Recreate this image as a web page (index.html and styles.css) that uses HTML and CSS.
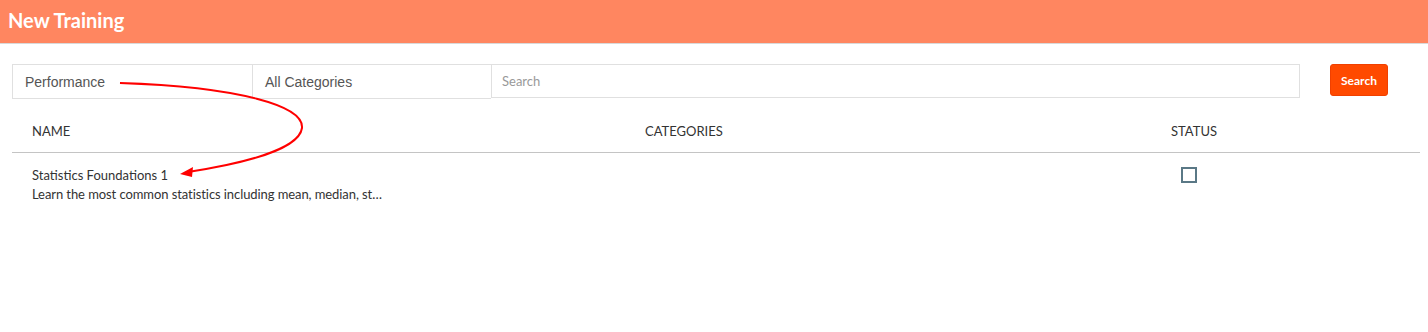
FILE: index.html
```html
<!DOCTYPE html>
<html lang="en">
<head>
    <meta charset="UTF-8">
    <meta name="viewport" content="width=device-width, initial-scale=1.0">
    <title>New Training</title>
    <link rel="stylesheet" href="styles.css">
</head>
<body>

<div class="page-header">
    <h1>New Training</h1>
</div>

<div class="filter-row">
    <div class="filter-group">
        <div class="filter-select">Performance</div>
        <div class="filter-select">All Categories</div>
        <input type="text" class="filter-search" placeholder="Search">
    </div>
    <button type="button" class="btn-search">Search</button>
</div>

<table class="training-table">
    <thead>
        <tr>
            <th class="col-name">Name</th>
            <th class="col-categories">Categories</th>
            <th class="col-status">Status</th>
        </tr>
    </thead>
    <tbody>
        <tr>
            <td>
                <div class="training-title">Statistics Foundations 1</div>
                <div class="training-desc">Learn the most common statistics including mean, median, st…</div>
            </td>
            <td></td>
            <td class="status-cell"><span class="status-box"></span></td>
        </tr>
    </tbody>
</table>

<!-- annotation arrow drawn over the page -->
<svg class="annotation" width="1428" height="332" viewBox="0 0 1428 332">
    <path d="M120 83 C 240 87, 304 106, 302 128 C 299 150, 240 164, 188 172" fill="none" stroke="#f00" stroke-width="2"/>
    <polygon points="180,174 193,167 192,177" fill="#f00"/>
</svg>

</body>
</html>
```

FILE: styles.css
```css
body {
    font-family: Lato, "Open Sans", Arial, sans-serif;
    margin: 0;
    padding: 0;
    background: #ffffff;
    color: #333333;
    position: relative;
    height: 332px;
    overflow: hidden;
}

.page-header {
    background-color: #ff8660;
    height: 43px;
    border-bottom: 1px solid #d9d9d9;
    padding: 0 8px;
    display: flex;
    align-items: center;
}

.page-header h1 {
    margin: 0;
    color: #ffffff;
    font-size: 20px;
    font-weight: 700;
    position: relative;
    top: -2px;
}

.filter-row {
    display: flex;
    align-items: flex-start;
    margin: 20px 0 0 12px;
}

.filter-group {
    display: flex;
    width: 1288px;
    height: 35px;
    box-sizing: border-box;
}

.filter-select {
    width: 240px;
    box-sizing: border-box;
    border: 1px solid #e0e0e0;
    border-right: none;
    padding: 0 12px;
    display: flex;
    align-items: center;
    font-family: "Liberation Sans", Arial, sans-serif;
    font-size: 14px;
    color: #555555;
}

.filter-select + .filter-select {
    width: 239px;
}

.filter-search {
    flex: 1;
    height: 34px;
    box-sizing: border-box;
    border: 1px solid #e0e0e0;
    padding: 0 10px;
    font-family: Lato, sans-serif;
    font-size: 13px;
    outline: none;
}

.filter-search::placeholder {
    color: #999999;
}

.btn-search {
    margin-left: 30px;
    width: 58px;
    height: 32px;
    background-color: #ff4a00;
    border: 1px solid #f04000;
    border-radius: 3px;
    color: #ffffff;
    font-family: Lato, sans-serif;
    font-size: 12px;
    font-weight: 700;
    padding: 0;
    cursor: pointer;
}

.training-table {
    margin: 10px 0 0 12px;
    width: 1408px;
    border-collapse: collapse;
    table-layout: fixed;
    font-size: 13px;
}

.training-table th {
    text-align: left;
    font-weight: 400;
    text-transform: uppercase;
    color: #333333;
    height: 43px;
    padding: 0 0 0 20px;
    border-bottom: 1px solid #c4c4c4;
}

.col-name {
    width: 593px;
}

.col-categories {
    width: 506px;
}

.training-table td {
    vertical-align: top;
    padding: 13px 0 0 20px;
}

.training-title {
    line-height: 18px;
}

.training-desc {
    line-height: 20px;
    letter-spacing: -0.08px;
}

.status-cell {
    padding-left: 30px !important;
}

.status-box {
    display: block;
    width: 16px;
    height: 16px;
    box-sizing: border-box;
    border: 2px solid #5a7886;
    margin-top: 1px;
}

.annotation {
    position: absolute;
    left: 0;
    top: 0;
    pointer-events: none;
}
```
